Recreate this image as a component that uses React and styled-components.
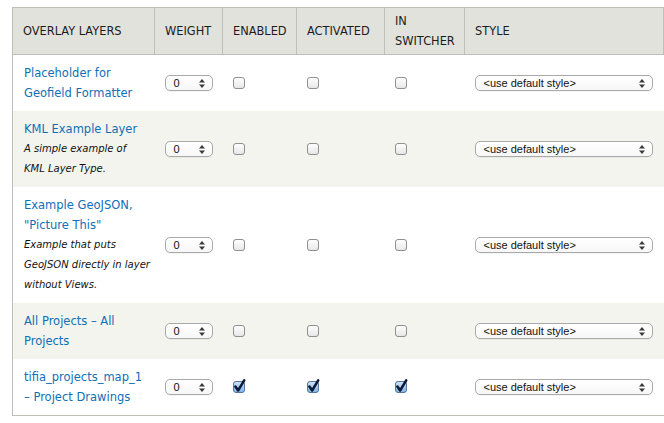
import React from "react";
import styled, { createGlobalStyle } from "styled-components";

const GlobalStyle = createGlobalStyle`
  html, body {
    margin: 0;
    padding: 0;
    background: #fff;
    overflow: hidden;
  }
  body {
    font-family: "DejaVu Sans", "Liberation Sans", sans-serif;
    color: #222;
  }
`;

// descriptions keep the line breaks of the original layout
const layers = [
  { title: "Placeholder for Geofield Formatter" },
  { title: "KML Example Layer", desc: ["A simple example of", "KML Layer Type."] },
  {
    title: 'Example GeoJSON, "Picture This"',
    desc: ["Example that puts", "GeoJSON directly in layer", "without Views."],
  },
  { title: "All Projects – All Projects" },
  { title: "tifia_projects_map_1 – Project Drawings", checked: true },
];

const Page = styled.div`
  padding: 7px 0 0 12px;
`;

const Table = styled.table`
  width: 652px;
  border-collapse: collapse;
  table-layout: fixed;
  border-left: 1px solid #bebfb9;
  border-top: 1px solid #bebfb9;
  border-bottom: 1px solid #bebfb9;
`;

const HeadCell = styled.th`
  width: ${(p) => (p.$w ? `${p.$w}px` : "auto")};
  background: #e1e2dc;
  border-right: 1px solid #bebfb9;
  border-bottom: 1px solid #bebfb9;
  padding: 3px 10px;
  text-align: left;
  vertical-align: middle;
  font-weight: normal;
  font-size: 11.4px;
  line-height: 20px;
  text-transform: uppercase;
  color: #1c1c1c;
  box-sizing: border-box;
`;

const Row = styled.tr`
  background: ${(p) => (p.$odd ? "#f3f4ee" : "#ffffff")};
`;

const Cell = styled.td`
  padding: 8px ${(p) => (p.$tight ? 7 : 10)}px 8px 10px;
  vertical-align: middle;
  line-height: 20px;
  font-size: 11px;
`;

const LayerLink = styled.a`
  display: block;
  color: #0f6fb7;
  text-decoration: none;
  font-size: 11.5px;
  padding-left: 1px;
`;

const Description = styled.div`
  font-size: 10px;
  font-style: italic;
  color: #111;
  line-height: 20px;
  padding-left: 1px;
  white-space: nowrap;
`;

const Control = styled.div`
  position: relative;
  box-sizing: border-box;
  width: ${(p) => p.$w}px;
  height: 16px;
  border: 1px solid #a9a9a9;
  border-radius: 5px;
  background: linear-gradient(#ffffff, #f7f7f7);
  box-shadow: 0 1px 0 rgba(0, 0, 0, 0.04);
  font-family: "Liberation Sans", Arial, sans-serif;
  font-size: 11px;
  line-height: 14px;
  color: #111;
  padding-left: ${(p) => p.$pad}px;
  display: flex;
  align-items: center;
`;

const Arrows = styled.svg`
  position: absolute;
  right: 7px;
  top: 3px;
`;

const Box = styled.span`
  display: block;
  width: 12px;
  height: 12px;
`;

const SpinArrows = () => (
  <Arrows width="6" height="9" viewBox="0 0 6 9">
    <path d="M3 0 L6 3.5 L0 3.5 Z" fill="#3a3a3a" />
    <path d="M0 5.5 L6 5.5 L3 9 Z" fill="#3a3a3a" />
  </Arrows>
);

const Checkbox = ({ checked }) => (
  <Box>
    <svg width="14" height="14" viewBox="0 0 14 14" style={{ overflow: "visible" }}>
      <defs>
        <linearGradient id="cbOff" x1="0" y1="0" x2="0" y2="1">
          <stop offset="0" stopColor="#ffffff" />
          <stop offset="1" stopColor="#e6e6e6" />
        </linearGradient>
        <linearGradient id="cbOn" x1="0" y1="0" x2="0" y2="1">
          <stop offset="0" stopColor="#d4e6fb" />
          <stop offset="1" stopColor="#7fb0e6" />
        </linearGradient>
      </defs>
      <rect
        x="0.5"
        y="0.5"
        width="11"
        height="11"
        rx="2.5"
        fill={checked ? "url(#cbOn)" : "url(#cbOff)"}
        stroke={checked ? "#5577a0" : "#8f8f8f"}
      />
      {checked && (
        <path
          d="M2.4 5.6 L5.2 9.4 L11.2 -0.6"
          fill="none"
          stroke="#0b1a36"
          strokeWidth="2.6"
          strokeLinecap="round"
          strokeLinejoin="round"
        />
      )}
    </svg>
  </Box>
);

const columns = [
  { label: "Overlay layers", w: 142 },
  { label: "Weight", w: 68 },
  { label: "Enabled", w: 74 },
  { label: "Activated", w: 88 },
  { label: "In switcher", w: 80 },
  { label: "Style" },
];

export default function App() {
  return (
    <Page>
      <GlobalStyle />
      <Table>
        <thead>
          <tr>
            {columns.map((c) => (
              <HeadCell key={c.label} $w={c.w}>
                {c.label}
              </HeadCell>
            ))}
          </tr>
        </thead>
        <tbody>
          {layers.map((l, i) => (
            <Row key={l.title} $odd={i % 2 === 1}>
              <Cell $tight>
                <LayerLink href="#">{l.title}</LayerLink>
                {l.desc &&
                  l.desc.map((line) => <Description key={line}>{line}</Description>)}
              </Cell>
              <Cell>
                <Control $w={48} $pad={8}>
                  0
                  <SpinArrows />
                </Control>
              </Cell>
              <Cell>
                <Checkbox checked={l.checked} />
              </Cell>
              <Cell>
                <Checkbox checked={l.checked} />
              </Cell>
              <Cell>
                <Checkbox checked={l.checked} />
              </Cell>
              <Cell>
                <Control $w={178} $pad={8}>
                  &lt;use default style&gt;
                  <SpinArrows />
                </Control>
              </Cell>
            </Row>
          ))}
        </tbody>
      </Table>
    </Page>
  );
}
